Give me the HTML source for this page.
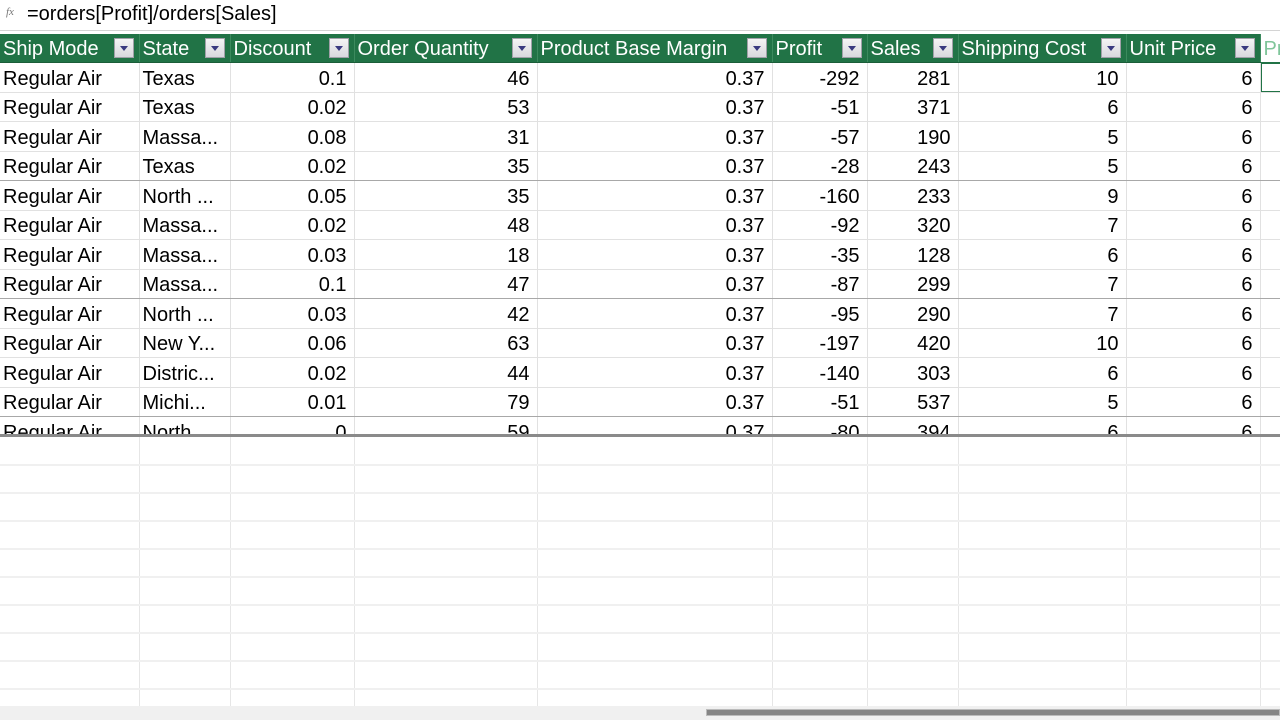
<!DOCTYPE html>
<html><head><meta charset="utf-8"><style>
body{margin:0;width:1280px;height:720px;overflow:hidden;background:#fff;font-family:"Liberation Sans",Arial,sans-serif;position:relative}
.fb{position:absolute;left:0;top:0;width:1280px;height:30px;border-bottom:1px solid #d4d4d4;background:#fff}
.fx{position:absolute;left:6px;top:6px;font-family:"Liberation Serif",serif;font-style:italic;font-size:11px;color:#777}
.ff{position:absolute;left:27px;top:3px;font-size:20px;color:#000}
table{position:absolute;left:0;top:34px;border-collapse:collapse;table-layout:fixed;font-size:20px;width:1290px}
td{height:26px;padding:2.5px 7px 0 3px;border-right:1px solid #e1e1e1;border-bottom:1px solid #e1e1e1;white-space:nowrap;overflow:hidden;line-height:26px;box-sizing:content-box}
td.n{text-align:right}
tr.h td{background:#217346;color:#fff;border-right:1px solid #3c8a5e;border-bottom:1px solid #1b5e39;position:relative;height:26px;line-height:26px;padding-top:2px}
tr.h td.last{background:#fff;color:#7fc59a;border:1px solid #217346;border-top:none}
.dd{position:absolute;right:5px;top:4px;width:20px;height:20px;background:linear-gradient(#f4f4f4,#d8d8de);border:1px solid #a0a0a8;box-sizing:border-box}
.dd:after{content:"";position:absolute;left:5px;top:7px;border-left:4px solid transparent;border-right:4px solid transparent;border-top:5px solid #3a3a80}
tr.g td{border-bottom:1px solid #a8a8a8}
.sel{position:absolute;left:1261px;top:63px;width:19px;height:29px;border:1px solid #217346;border-right:none;box-sizing:border-box}
.sep{position:absolute;left:0;top:434px;width:1280px;height:3px;background:#8a8a8a}
.blank{position:absolute;left:0;top:437px;width:1280px;height:269px;background:#fff}
.sb{position:absolute;left:0;top:706px;width:1280px;height:14px;background:#f0f0f0}
.th{position:absolute;left:706px;top:709px;width:574px;height:7px;background:#858585;border:1px solid #bbb;box-sizing:border-box}
</style></head><body>
<div class="fb"><span class="fx">fx</span><span class="ff">=orders[Profit]/orders[Sales]</span></div>
<table>
<colgroup><col style="width:139px"><col style="width:91px"><col style="width:124px"><col style="width:183px"><col style="width:235px"><col style="width:95px"><col style="width:91px"><col style="width:168px"><col style="width:134px"><col style="width:30px"></colgroup>
<tr class="h"><td>Ship Mode<span class="dd"></span></td><td>State<span class="dd"></span></td><td>Discount<span class="dd"></span></td><td>Order Quantity<span class="dd"></span></td><td>Product Base Margin<span class="dd"></span></td><td>Profit<span class="dd"></span></td><td>Sales<span class="dd"></span></td><td>Shipping Cost<span class="dd"></span></td><td>Unit Price<span class="dd"></span></td><td class="last">Pr</td></tr>
<tr><td>Regular Air</td><td>Texas</td><td class="n">0.1</td><td class="n">46</td><td class="n">0.37</td><td class="n">-292</td><td class="n">281</td><td class="n">10</td><td class="n">6</td><td></td></tr>
<tr><td>Regular Air</td><td>Texas</td><td class="n">0.02</td><td class="n">53</td><td class="n">0.37</td><td class="n">-51</td><td class="n">371</td><td class="n">6</td><td class="n">6</td><td></td></tr>
<tr><td>Regular Air</td><td>Massa...</td><td class="n">0.08</td><td class="n">31</td><td class="n">0.37</td><td class="n">-57</td><td class="n">190</td><td class="n">5</td><td class="n">6</td><td></td></tr>
<tr class="g"><td>Regular Air</td><td>Texas</td><td class="n">0.02</td><td class="n">35</td><td class="n">0.37</td><td class="n">-28</td><td class="n">243</td><td class="n">5</td><td class="n">6</td><td></td></tr>
<tr><td>Regular Air</td><td>North ...</td><td class="n">0.05</td><td class="n">35</td><td class="n">0.37</td><td class="n">-160</td><td class="n">233</td><td class="n">9</td><td class="n">6</td><td></td></tr>
<tr><td>Regular Air</td><td>Massa...</td><td class="n">0.02</td><td class="n">48</td><td class="n">0.37</td><td class="n">-92</td><td class="n">320</td><td class="n">7</td><td class="n">6</td><td></td></tr>
<tr><td>Regular Air</td><td>Massa...</td><td class="n">0.03</td><td class="n">18</td><td class="n">0.37</td><td class="n">-35</td><td class="n">128</td><td class="n">6</td><td class="n">6</td><td></td></tr>
<tr class="g"><td>Regular Air</td><td>Massa...</td><td class="n">0.1</td><td class="n">47</td><td class="n">0.37</td><td class="n">-87</td><td class="n">299</td><td class="n">7</td><td class="n">6</td><td></td></tr>
<tr><td>Regular Air</td><td>North ...</td><td class="n">0.03</td><td class="n">42</td><td class="n">0.37</td><td class="n">-95</td><td class="n">290</td><td class="n">7</td><td class="n">6</td><td></td></tr>
<tr><td>Regular Air</td><td>New Y...</td><td class="n">0.06</td><td class="n">63</td><td class="n">0.37</td><td class="n">-197</td><td class="n">420</td><td class="n">10</td><td class="n">6</td><td></td></tr>
<tr><td>Regular Air</td><td>Distric...</td><td class="n">0.02</td><td class="n">44</td><td class="n">0.37</td><td class="n">-140</td><td class="n">303</td><td class="n">6</td><td class="n">6</td><td></td></tr>
<tr class="g"><td>Regular Air</td><td>Michi...</td><td class="n">0.01</td><td class="n">79</td><td class="n">0.37</td><td class="n">-51</td><td class="n">537</td><td class="n">5</td><td class="n">6</td><td></td></tr>
<tr><td>Regular Air</td><td>North ...</td><td class="n">0</td><td class="n">59</td><td class="n">0.37</td><td class="n">-80</td><td class="n">394</td><td class="n">6</td><td class="n">6</td><td></td></tr>
</table>
<div class="sel"></div>
<div class="blank">
<svg width="1280" height="269" style="position:absolute;left:0;top:0">
<g stroke="#e6e6e6" stroke-width="1">
<line x1="139.5" y1="0" x2="139.5" y2="269"/><line x1="230.5" y1="0" x2="230.5" y2="269"/><line x1="354.5" y1="0" x2="354.5" y2="269"/><line x1="537.5" y1="0" x2="537.5" y2="269"/><line x1="772.5" y1="0" x2="772.5" y2="269"/><line x1="867.5" y1="0" x2="867.5" y2="269"/><line x1="958.5" y1="0" x2="958.5" y2="269"/><line x1="1126.5" y1="0" x2="1126.5" y2="269"/><line x1="1260.5" y1="0" x2="1260.5" y2="269"/>
</g>
<g stroke="#f0f0f0" stroke-width="2">
<line x1="0" y1="28" x2="1280" y2="28"/><line x1="0" y1="56" x2="1280" y2="56"/><line x1="0" y1="84" x2="1280" y2="84"/><line x1="0" y1="112" x2="1280" y2="112"/><line x1="0" y1="140" x2="1280" y2="140"/><line x1="0" y1="168" x2="1280" y2="168"/><line x1="0" y1="196" x2="1280" y2="196"/><line x1="0" y1="224" x2="1280" y2="224"/><line x1="0" y1="252" x2="1280" y2="252"/>
</g></svg>
</div>
<div class="sep"></div>
<div class="sb"></div><div class="th"></div>
</body></html>
